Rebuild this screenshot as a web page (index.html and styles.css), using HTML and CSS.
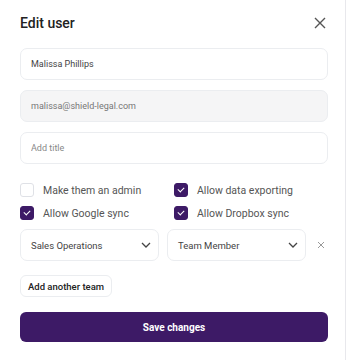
FILE: index.html
```html
<!DOCTYPE html>
<html lang="en">
  <head>
    <meta charset="UTF-8" />
    <meta name="viewport" content="width=device-width, initial-scale=1.0" />
    <title>Edit user</title>
    <link rel="stylesheet" href="styles.css">
  </head>
  <body>
    <div class="modal">
      <div class="header">
        <h1>Edit user</h1>
        <button class="close" type="button">
          <svg width="12" height="12" viewBox="0 0 12 12"><path d="M1 1L11 11M11 1L1 11" stroke="#555" stroke-width="1.4" fill="none"/></svg>
        </button>
      </div>
      <form class="form">
        <input class="field" type="text" value="Malissa Phillips" />
        <input class="field disabled" type="text" value="malissa@shield-legal.com" disabled />
        <input class="field" type="text" placeholder="Add title" />

        <div class="checks">
          <label class="check"><span class="box"></span>Make them an admin</label>
          <label class="check"><span class="box on"></span>Allow data exporting</label>
          <label class="check"><span class="box on"></span>Allow Google sync</label>
          <label class="check"><span class="box on"></span>Allow Dropbox sync</label>
        </div>

        <div class="team-row">
          <div class="select">Sales Operations
            <svg width="10" height="6" viewBox="0 0 10 6"><path d="M1 1L5 5L9 1" stroke="#444" stroke-width="1.3" fill="none"/></svg>
          </div>
          <div class="select">Team Member
            <svg width="10" height="6" viewBox="0 0 10 6"><path d="M1 1L5 5L9 1" stroke="#444" stroke-width="1.3" fill="none"/></svg>
          </div>
          <span class="remove">
            <svg width="8" height="8" viewBox="0 0 8 8"><path d="M1 1L7 7M7 1L1 7" stroke="#999" stroke-width="1" fill="none"/></svg>
          </span>
        </div>

        <div><button class="add" type="button">Add another team</button></div>
        <button class="save" type="button">Save changes</button>
      </form>
    </div>
  </body>
</html>
```

FILE: styles.css
```css
body {
  margin: 0;
  background-color: #fff;
  font-family: Roboto, "Liberation Sans", sans-serif;
}

.modal {
  width: 346px;
  height: 360px;
  box-sizing: border-box;
  border-right: 1px solid #e8e8ec;
  padding: 12px 17px 0 20px;
}

.header {
  display: flex;
  justify-content: space-between;
  align-items: center;
  height: 22px;
  margin-bottom: 14px;
}

h1 {
  margin: 0;
  font-size: 14px;
  font-weight: 500;
  color: #222;
}

.close {
  border: none;
  background: none;
  padding: 0;
  margin-right: 2px;
  display: flex;
}

.form {
  display: flex;
  flex-direction: column;
}

.field {
  height: 32px;
  box-sizing: border-box;
  border: 1px solid #ebedf0;
  border-radius: 7px;
  padding: 0 10px;
  margin-bottom: 10px;
  font-family: inherit;
  font-size: 9px;
  color: #444;
  background: #fff;
}

.field::placeholder {
  color: #888;
}

.field.disabled {
  background: #f5f5f6;
  color: #777;
}

.checks {
  display: grid;
  grid-template-columns: 154px 1fr;
  row-gap: 9px;
  margin-top: 9px;
  margin-bottom: 9px;
}

.check {
  display: flex;
  align-items: center;
  font-size: 10.5px;
  color: #555;
}

.box {
  width: 12px;
  height: 12px;
  border: 1px solid #dfe1e6;
  border-radius: 3px;
  margin-right: 9px;
  position: relative;
}

.box.on {
  background: #3d1a66;
  border-color: #3d1a66;
}

.box.on::after {
  content: "";
  position: absolute;
  left: 3px;
  top: 3px;
  width: 5px;
  height: 3px;
  border-left: 1.5px solid #fff;
  border-bottom: 1.5px solid #fff;
  transform: rotate(-45deg);
}

.team-row {
  display: flex;
  align-items: center;
  gap: 8px;
}

.select {
  width: 139px;
  height: 32px;
  box-sizing: border-box;
  border: 1px solid #ebedf0;
  border-radius: 7px;
  padding: 0 7px 0 10px;
  display: flex;
  justify-content: space-between;
  align-items: center;
  font-size: 9.5px;
  color: #444;
}

.remove {
  display: flex;
  margin-left: 3px;
}

.add {
  margin-top: 14px;
  height: 22px;
  border: 1px solid #ebedf0;
  border-radius: 6px;
  background: #fff;
  padding: 0 7px;
  font-family: inherit;
  font-size: 9.5px;
  font-weight: 500;
  color: #222;
}

.save {
  margin-top: 15px;
  height: 30px;
  border: none;
  border-radius: 6px;
  background: #3d1a66;
  color: #fff;
  font-family: inherit;
  font-size: 10px;
  font-weight: 700;
}
```
